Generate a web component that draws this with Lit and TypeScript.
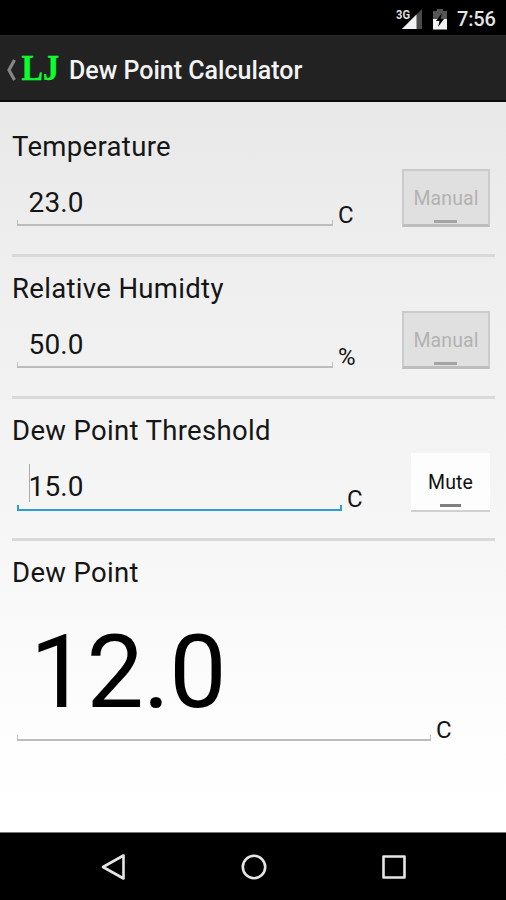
import { LitElement, html, css, nothing } from "lit";
import { customElement, property } from "lit/decorators.js";

@customElement("status-bar")
class StatusBar extends LitElement {
  static styles = css`
    :host {
      display: flex;
      align-items: center;
      height: 35px;
      background: #000;
      color: #e4e4e4;
      font: 500 20px/24px Roboto, sans-serif;
      justify-content: flex-end;
      padding: 3px 11px 0 0;
      box-sizing: border-box;
    }
    svg { display: block; overflow: visible; }
    .signal { margin-right: 11px; }
    .battery { margin-right: 10px; }
    .net { font: 700 12.500px Roboto, sans-serif; fill: #ddd; }
    .time { width: 38px; white-space: nowrap; letter-spacing: -0.2px; }
  `;
  render() {
    return html`
      <svg class="signal" width="26" height="24" viewBox="396 6 26 24">
        <path d="M422 8V28H402Z" fill="#4a4a4a" />
        <path d="M416.500 13.500V28H402Z" fill="#f2f2f2" />
        <text class="net" x="396" y="17.500" textLength="14" lengthAdjust="spacingAndGlyphs">3G</text>
      </svg>
      <svg class="battery" width="14" height="24" viewBox="433 6 14 24">
        <path d="M433 10H437V8H443V10H447V19H433Z" fill="#555" />
        <path d="M433 18H447V28.500H433Z" fill="#f2f2f2" />
        <path d="M442 12L436 20H439.500L438 26L444 18H440.500Z" fill="#000" />
      </svg>
      <span class="time">7:56</span>
    `;
  }
}

@customElement("action-bar")
class ActionBar extends LitElement {
  static styles = css`
    :host {
      display: flex;
      align-items: center;
      height: 67px;
      background: #222;
      border-top: 1px solid #2c2c2c;
      border-bottom: 2px solid #0c0c0c;
      box-sizing: border-box;
      padding-left: 6px;
      color: #f3f3f3;
    }
    .back { display: block; margin: 3px 5px 0 0; }
    .logo {
      display: block;
      width: 39px;
      margin-right: 9px;
      height: 48px;
      overflow: visible;
    }
    .mark { font: 700 35px "Liberation Serif", serif; fill: #0cff2c; stroke: #0cff2c; stroke-width: 0.4; }
    .title { font: 500 25px/34px Roboto, sans-serif; white-space: nowrap; padding-top: 5px; }
  `;
  render() {
    return html`
      <svg class="back" width="10" height="24" viewBox="0 0 10 24">
        <path d="M8.500 2L3 12L8.500 22" fill="none" stroke="#858585" stroke-width="3.200" />
      </svg>
      <svg class="logo" viewBox="0 0 39 48">
        <text class="mark" x="0.500" y="36" textLength="37.500" lengthAdjust="spacingAndGlyphs">LJ</text>
      </svg>
      <span class="title">Dew Point Calculator</span>
    `;
  }
}

@customElement("reading-section")
class ReadingSection extends LitElement {
  @property() label = "";
  @property() value = "";
  @property() unit = "";
  @property() action = "";
  @property({ type: Boolean, reflect: true }) focused = false;
  @property({ type: Boolean, reflect: true }) result = false;

  static styles = css`
    :host {
      display: block;
      height: 142px;
      box-sizing: border-box;
      padding: 16px 0 0;
      border-bottom: 3px solid #d9d9d9;
      color: #151515;
      font-family: Roboto, sans-serif;
    }
    .label { font-size: 27.5px; line-height: 32px; white-space: nowrap; letter-spacing: 0.33px; }
    .row { display: flex; align-items: flex-start; padding: 0 5px; height: 76px; margin-top: 6px; }
    .field {
      display: flex;
      align-items: center;
      position: relative;
      width: 316px;
      height: 57px;
      box-sizing: border-box;
      border-bottom: 2px solid #bcbcbc;
      padding: 12px 0 0 11.5px;
      font-size: 28px;
      line-height: 36px;
      letter-spacing: 0.15px;
    }
    .field::after {
      content: "";
      position: absolute;
      left: 0;
      right: 0;
      bottom: 0;
      height: 4px;
      border: solid #c0c0c0;
      border-width: 0 1px;
    }
    .caret { position: absolute; left: 12px; top: 11px; width: 1px; height: 38px; background: #aaa; }
    .unit { font-size: 24px; line-height: 28px; padding: 32px 0 0 5px; flex: 1; }
    .button {
      position: relative;
      box-sizing: border-box;
      width: 88px;
      height: 58px;
      background: #e0e0e0;
      border: 2px solid #cbcbcb;
      border-bottom: 3px solid #bdbdbd;
      color: #b2b2b2;
      font: 400 19.5px/24px Roboto, sans-serif;
      padding: 16px 0 0;
      text-align: center;
      letter-spacing: 0.1px;
    }
    .button::after {
      content: "";
      position: absolute;
      left: 50%;
      margin-left: -12px;
      bottom: 1px;
      width: 23px;
      height: 3px;
      background: #a4a4a4;
    }
    :host([focused]) .field { width: 325px; height: 58px; border-bottom: 2px solid #2b9fd0; }
    :host([focused]) .field::after { border-color: #2b9fd0; border-width: 0 2px; }
    :host([focused]) .button {
      width: 79px;
      height: 59px;
      background: #fdfdfd;
      border: 0;
      border-bottom: 2px solid #d0d0d0;
      color: #111;
      padding-top: 18px;
    }
    :host([focused]) .button::after { width: 21px; margin-left: -11px; bottom: 3px; background: #808080; }
    :host([result]) { border: 0; height: 220px; }
    :host([result]) .row { height: 146px; }
    :host([result]) .field {
      width: 414px;
      height: 146px;
      font-size: 102px;
      line-height: 120px;
      letter-spacing: -0.8px;
      color: #000;
      padding: 10px 0 0 13px;
    }
    :host([result]) .unit { padding-top: 121px; }
  `;
  render() {
    return html`
      <div class="label">${this.label}</div>
      <div class="row">
        <div class="field">
          ${this.focused ? html`<span class="caret"></span>` : nothing}${this.value}
        </div>
        <div class="unit">${this.unit}</div>
        ${this.action ? html`<div class="button">${this.action}</div>` : nothing}
      </div>
    `;
  }
}

@customElement("nav-bar")
class NavBar extends LitElement {
  static styles = css`
    :host {
      display: flex;
      justify-content: space-between;
      align-items: center;
      height: 68px;
      box-sizing: border-box;
      background: #000;
      border-top: 1px solid #777;
      padding: 0 98px 0 99px;
    }
    svg { display: block; fill: none; stroke: #e6e6e6; stroke-width: 2.600; stroke-linejoin: round; }
  `;
  render() {
    return html`
      <svg width="28" height="28" viewBox="0 0 28 28"><path d="M24.500 2.500V25.500L4 14Z" /></svg>
      <svg width="28" height="28" viewBox="0 0 28 28"><circle cx="14" cy="14" r="11.200" /></svg>
      <svg width="28" height="28" viewBox="0 0 28 28"><rect x="3.500" y="3.500" width="21" height="21" /></svg>
    `;
  }
}

@customElement("app-root")
class AppRoot extends LitElement {
  static styles = css`
    :host {
      display: flex;
      flex-direction: column;
      width: 506px;
      height: 900px;
      overflow: hidden;
    }
    .content {
      flex: 1;
      min-height: 0;
      padding: 13px 11px 0 12px;
      background: linear-gradient(#e8e8e8, #eee 20%, #f5f5f5 55%, #fdfdfd 85%, #fff);
    }
  `;
  render() {
    return html`
      <status-bar></status-bar>
      <action-bar></action-bar>
      <main class="content">
        <reading-section label="Temperature" value="23.0" unit="C" action="Manual"></reading-section>
        <reading-section label="Relative Humidty" value="50.0" unit="%" action="Manual"></reading-section>
        <reading-section label="Dew Point Threshold" value="15.0" unit="C" action="Mute" focused></reading-section>
        <reading-section label="Dew Point" value="12.0" unit="C" result></reading-section>
      </main>
      <nav-bar></nav-bar>
    `;
  }
}
